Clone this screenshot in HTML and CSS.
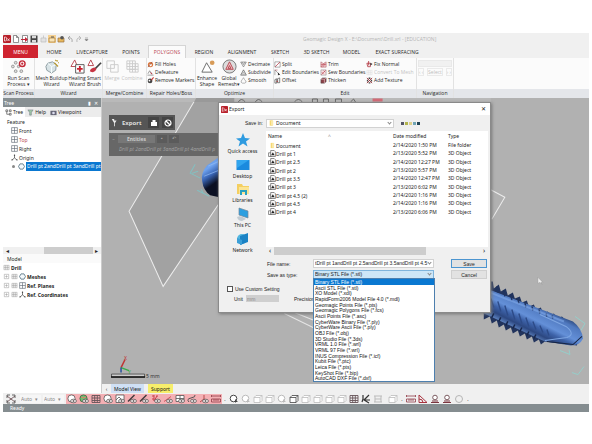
FILE: index.html
```html
<!DOCTYPE html>
<html lang="en">
<head>
<meta charset="utf-8">
<title>Geomagic Design X</title>
<link rel="stylesheet" href="styles.css">
</head>
<body>
<svg class="defs" aria-hidden="true">
  <symbol id="app" viewBox="0 0 8 8"><rect width="8" height="8" rx="1" fill="#b8202a"/><path d="M1.5 2v4h1.2q1-.5 1-2t-1-2zM4.5 3.5l2 2.5M6.5 3.5l-2 2.5" stroke="#fff" stroke-width=".7" fill="none"/></symbol>
  <symbol id="doc" viewBox="0 0 8 8"><path d="M1.5.5h3l2 2v5h-5zM4.500.5v2h2" fill="#fff" stroke="#666" stroke-width=".7"/></symbol>
  <symbol id="plane" viewBox="0 0 8 8"><path d="M.7.7h6.600v6.600H.7zM4 .7v6.600M.7 4h6.600" fill="#fff" stroke="#5b6570" stroke-width=".7"/></symbol>
  <symbol id="origin" viewBox="0 0 8 8"><path d="M4 1v3.500L1 7M4 4.500 7 7" fill="none" stroke="#444" stroke-width=".8"/><circle cx="4" cy="1.500" r=".8" fill="#444"/><circle cx="1.200" cy="6.700" r=".8" fill="#444"/><circle cx="6.800" cy="6.700" r=".8" fill="#444"/></symbol>
  <symbol id="hex" viewBox="0 0 8 8"><path d="M2.300 1h3.400L7.400 4 5.700 7H2.300L.6 4z" fill="#f3f8fb" stroke="#4d6b7c" stroke-width=".9"/></symbol>
  <symbol id="box" viewBox="0 0 8 8"><path d="M1 1.500h6v5H1zM1 4h6M3 1.500v5M5 1.500v5" fill="#eee" stroke="#999" stroke-width=".5"/></symbol>
  <symbol id="plus" viewBox="0 0 8 8"><path d="M1.500 1.500h5v5h-5zM4 2.500v3M2.500 4h3" fill="#fff" stroke="#999" stroke-width=".6"/></symbol>
  <symbol id="tri" viewBox="0 0 8 8"><path d="M4 1 7.200 7H.8z" fill="none" stroke="#555" stroke-width=".8"/><path d="M4 3.500 5.300 6H2.700z" fill="none" stroke="#777" stroke-width=".5"/></symbol>
  <symbol id="deci" viewBox="0 0 8 8"><path d="M.8 1.200h6.400L4 6.800zM2.300 1.200 4 4l1.700-2.800" fill="none" stroke="#666" stroke-width=".7"/></symbol>
  <symbol id="smooth" viewBox="0 0 8 8"><path d="M4 .8Q5 3 6.500 4.500T5.500 7h-3q-2-1-1-2.500T4 .8z" fill="none" stroke="#888" stroke-width=".7"/></symbol>
  <symbol id="split" viewBox="0 0 8 8"><path d="M1 1h6v6H1z" fill="#fff" stroke="#666" stroke-width=".6"/><path d="M1.200 6.800 6.800 1.200" stroke="#b94450" stroke-width=".9"/></symbol>
  <symbol id="edge" viewBox="0 0 8 8"><path d="M1 7V1l6 6" fill="none" stroke="#666" stroke-width=".6"/><path d="M4.500 4v3.500l1-1H7z" fill="#222"/><path d="M1 1.200h3" stroke="#b94450" stroke-width=".6"/></symbol>
  <symbol id="offset" viewBox="0 0 8 8"><path d="M1 3v4h2V2zM4 2v4.500h2.500V1z" fill="#eee" stroke="#444" stroke-width=".7"/><path d="M3 5h1.500" stroke="#b33"/></symbol>
  <symbol id="trim" viewBox="0 0 8 8"><path d="M1 7V1l3 2 3-2v6z" fill="#f0c9cc" stroke="#a95b63" stroke-width=".6"/><path d="M1 7 5 2M3 7l3-4M1 4h6" stroke="#b94450" stroke-width=".6"/></symbol>
  <symbol id="sew" viewBox="0 0 8 8"><path d="M1 1h6v6H1z" fill="#f7dfe1" stroke="#777" stroke-width=".5"/><path d="M1.500 6.500 6.500 1.500M2 3.500l2 2M4 1.800l2 2" stroke="#b94450" stroke-width=".7"/></symbol>
  <symbol id="thick" viewBox="0 0 8 8"><path d="M1 2.500 3 1h4v4.500L5 7H1z" fill="#8b4048" stroke="#444" stroke-width=".5"/><path d="M1 2.500h4V7M5 2.500 7 1" fill="none" stroke="#f2d5d7" stroke-width=".7"/></symbol>
  <symbol id="norm" viewBox="0 0 8 8"><path d="M1 2.500h4v4H2zM3 0v5" fill="none" stroke="#b0303b" stroke-width=".9"/><path d="m5 2 2.500 1.500L5 5z" fill="#333"/></symbol>
  <symbol id="tex" viewBox="0 0 8 8"><path d="m1 1 6 6M7 1 1 7" stroke="#a4323c" stroke-width="1"/><path d="M1 3h1.500v2H1zM5.500 3H7v2H5.500zM3 .7h2v1.500H3zM3 6h2v1.500H3z" fill="#444"/></symbol>
  <symbol id="fill" viewBox="0 0 8 8"><circle cx="4" cy="4" r="3" fill="#d9773f"/><circle cx="4" cy="4.500" r="1.500" fill="#fff"/><path d="M1 7 6 1" stroke="#7a3020" stroke-width=".7"/></symbol>
  <symbol id="defe" viewBox="0 0 8 8"><path d="M.5 7h7M1 5.500 3 2l2 3" fill="none" stroke="#777" stroke-width=".8"/><path d="m4 4 2 2" stroke="#b0303b" stroke-width="1.200"/></symbol>
  <symbol id="remo" viewBox="0 0 8 8"><circle cx="3.500" cy="4.500" r="2.700" fill="#444"/><circle cx="2.800" cy="4" r="1" fill="#fff"/><path d="M5 3.500 7.500.5" stroke="#c33" stroke-width="1.200"/></symbol>
  <symbol id="eye" viewBox="0 0 12 10"><ellipse cx="7.500" cy="7" rx="3" ry="1.800" fill="#efe6e6" stroke="#4b4b4b" stroke-width=".7"/><circle cx="7.500" cy="7" r=".8" fill="#333"/></symbol>
  <symbol id="ball" viewBox="0 0 12 10"><circle cx="5.500" cy="4.500" r="3.600" fill="#fff" stroke="#555" stroke-width=".8"/><use href="#eye" width="12" height="10"/></symbol>
  <symbol id="gball" viewBox="0 0 12 10"><circle cx="5.500" cy="4.500" r="3.600" fill="#6fbf72" stroke="#3c6340" stroke-width=".8"/><path d="M3 3q2 2 5 0" stroke="#e76" fill="none"/><use href="#eye" width="12" height="10"/></symbol>
  <symbol id="gridi" viewBox="0 0 12 10"><path d="M2 1.500h8v7H2zM2 4h8M2 6.500h8M4.700 1.500v7M7.300 1.500v7" fill="none" stroke="#665358" stroke-width=".9"/></symbol>
  <symbol id="cube" viewBox="0 0 12 10"><path d="M2 3.500 4 1.500h6v5l-2 2H2zM2 3.500h6v5M8 3.500l2-2" fill="#fff" stroke="currentColor" stroke-width=".8"/></symbol>
  <symbol id="pict" viewBox="0 0 12 10"><path d="M2 1h8v7.500H2zM2 6l3-3 4 4" fill="#fff" stroke="#555" stroke-width=".8"/><use href="#eye" width="12" height="10"/></symbol>
  <symbol id="pen" viewBox="0 0 12 10"><path d="M2 7.500 8.500 1" stroke="#403a3c" stroke-width="1.400"/><use href="#eye" width="12" height="10"/></symbol>
  <symbol id="pts" viewBox="0 0 12 10"><path d="M2 2h2M6 2h2M2 5h2M4 1v6M7 2 4 7" stroke="#c8404c" stroke-width="1"/><use href="#eye" width="12" height="10"/></symbol>
  <symbol id="line" viewBox="0 0 12 10"><path d="M2 7.500 9 2.500" stroke="#c8404c" stroke-width=".8"/><use href="#eye" width="12" height="10"/></symbol>
  <symbol id="curve" viewBox="0 0 12 10"><path d="M3 8Q0 5 5 4t4-3" stroke="#555" fill="none"/><use href="#eye" width="12" height="10"/></symbol>
  <symbol id="axes" viewBox="0 0 12 10"><path d="M6 1v4L2 8M6 5l4 3" stroke="#a33" fill="none" stroke-width=".8"/><use href="#eye" width="12" height="10"/></symbol>
  <symbol id="planes" viewBox="0 0 12 10"><path d="M2 1.500h8v6H2zM6 1.500v6M2 4.500h8" fill="#fff" stroke="#555" stroke-width=".8"/><use href="#eye" width="12" height="10"/></symbol>
  <symbol id="ruler" viewBox="0 0 12 10"><path d="M1.500 2h9M1.500 5h9v3h-9zM4 5v2M6 5v2M8 5v2M1.500 1v2M10.500 1v2" fill="none" stroke="#903b46" stroke-width=".8"/></symbol>
  <symbol id="angle" viewBox="0 0 12 10"><path d="M2 1v7.500h8zM2 5q4 0 4 3.500" fill="none" stroke="#a8323e" stroke-width="1"/></symbol>
  <symbol id="stamp" viewBox="0 0 12 10"><path d="M2 8.500h8M3 7h6" stroke="#7c3640"/><circle cx="6" cy="3.500" r="2.300" fill="#fff" stroke="#6d4b50" stroke-width=".9"/></symbol>
  <symbol id="lasso" viewBox="0 0 12 10"><circle cx="5.500" cy="4.500" r="3.300" fill="#fff" stroke="currentColor"/><path d="M7 5v4l1-1h2z" fill="currentColor"/></symbol>
  <symbol id="dotd" viewBox="0 0 12 10"><path d="m2 2 8 6M10 2 2 8" stroke="#604146" stroke-width=".8"/><path d="M2 1h3M7 1h3M2 9h3M7 9h3M2 1v3M10 1v3M2 6v3M10 6v3" stroke="#444" stroke-width=".8"/></symbol>
  <symbol id="file3d" viewBox="0 0 9 8"><path d="M.6 3.200h3V7.400h-3z" fill="#fff" stroke="#444" stroke-width=".7"/><path d="M3 .6h4l1.400 1.400v5.400H3z" fill="#fff" stroke="#444" stroke-width=".7"/><path d="M5.500 2.500 7.500 6h-4z" fill="#222"/></symbol>
  <symbol id="folder" viewBox="0 0 9 8"><path d="M3 1h3.500v6H3z" fill="#f6d873"/><path d="M4.500 1.500H7v5H4.500z" fill="#fbe9a8"/></symbol>
</svg>

<div class="app">
  <header class="titlebar">
    <div class="quick">
      <svg><use href="#app"/></svg>
      <svg><use href="#doc"/></svg>
      <svg viewBox="0 0 8 8"><path d="M1.500.5h5v7h-5z" fill="#fff" stroke="#666" stroke-width=".7"/><path d="M0 4h4V2l3 2.500L4 7V5H0z" fill="#c0283a"/></svg>
      <svg viewBox="0 0 8 8"><path d="M.5.5h7v7h-7z" fill="#444"/><path d="M2 .8h4v2.500H2zM2 5h4v2.500H2z" fill="#ddd"/></svg>
      <svg viewBox="0 0 8 8"><path d="M2 3h5v4H2zM4.500 3V.5" fill="#e2e2e2" stroke="#bbb" stroke-width=".7"/></svg>
      <svg class="hot" viewBox="0 0 8 8"><path d="M1 3h6v4H1z" fill="#f8e4b8" stroke="#a97b35" stroke-width=".7"/><path d="M3 2h3" stroke="#555"/></svg>
      <svg viewBox="0 0 8 8"><path d="M1 3h6v4H1z" fill="#e9b95c" stroke="#987040" stroke-width=".7"/><circle cx="5" cy="2.800" r="1.800" fill="#555"/></svg>
      <svg viewBox="0 0 8 8"><path d="M6 7Q7 2 2 3M4 1 2 3l2 2" fill="none" stroke="#aaa"/></svg>
      <svg viewBox="0 0 8 8"><path d="M2 7Q1 2 6 3M4 1l2 2-2 2" fill="none" stroke="#bbb"/></svg>
      <svg viewBox="0 0 8 8"><path d="M1 3h3M1 4.500h3L2.500 6z" stroke="#777" fill="#777" stroke-width=".5"/></svg>
    </div>
    <div class="title">Geomagic Design X - E:\Document\Drill.xrl - [EDUCATION]</div>
  </header>

  <nav class="tabs">
    <button class="tab menu">MENU</button>
    <button class="tab">HOME</button>
    <button class="tab">LIVECAPTURE</button>
    <button class="tab">POINTS</button>
    <button class="tab active">POLYGONS</button>
    <button class="tab">REGION</button>
    <button class="tab">ALIGNMENT</button>
    <button class="tab">SKETCH</button>
    <button class="tab">3D SKETCH</button>
    <button class="tab">MODEL</button>
    <button class="tab">EXACT SURFACING</button>
  </nav>

  <section class="ribbon">
    <div class="group g-scan">
      <div class="tools">
        <button class="big"><svg viewBox="0 0 16 16"><g fill="#ddd" stroke="#888" stroke-width=".8"><circle cx="5" cy="4" r="1.500"/><circle cx="2" cy="8" r="1.500"/><circle cx="8" cy="8" r="1.300"/><circle cx="5" cy="13" r="1.500"/><circle cx="11" cy="13" r="1.500"/></g><circle cx="12" cy="5" r="3" fill="#fff" stroke="#c42836" stroke-width="1.500"/><circle cx="12" cy="5" r="1.200" fill="#c42836"/></svg>Run Scan<br>Process ▾</button>
      </div>
      <div class="caption">Scan Process</div>
    </div>
    <div class="group g-wizard">
      <div class="tools">
        <button class="big w32"><svg viewBox="0 0 16 16"><path d="M4 4.500 9 3l4 3-.5 6L8 15l-5-3-1-4z" fill="#d8e3e6" stroke="#8b9ba0"/><path d="M4 4.500 8 8l5-2M8 8v7" stroke="#f9ffff" fill="none"/><path d="m11 4 4 4M14 1v2M15 4h1M12 1l1 1" stroke="#b89a32" stroke-width="1.200"/></svg>Mesh Buildup<br>Wizard</button>
        <button class="big w18"><svg viewBox="0 0 16 16"><path d="M5 1 1 8h7z" fill="#fff" stroke="#b74650"/><path d="M6 6h9v9H6z" fill="#fff" stroke="#555"/><path d="M10.500 7.500v6M7.500 10.500h6" stroke="#c9202e" stroke-width="2"/></svg>Healing<br>Wizard</button>
        <button class="big w16"><svg viewBox="0 0 16 16"><path d="M4 1 1 7h6z" fill="#fff" stroke="#b74650"/><path d="m15 4-7 7" stroke="#444" stroke-width="1.800"/><path d="M9 9q-5 0-6 4 5 3 7-2z" fill="#c73543"/></svg>Smart<br>Brush</button>
      </div>
      <div class="caption">Wizard</div>
    </div>
    <div class="group g-merge">
      <div class="tools">
        <button class="big dim w18" disabled><svg viewBox="0 0 16 16"><path d="M2 2h8v8H2zM6 6h8v8H6z" fill="none" stroke="#ccc"/></svg>Merge</button>
        <button class="big dim w22" disabled><svg viewBox="0 0 16 16"><path d="M2 2h9v9H2zM5 2v12M8 2v12M2 5h12M2 8h12M5 14h9V5M5 11h9M11 5v9" fill="none" stroke="#ccc"/></svg>Combine</button>
      </div>
      <div class="caption">Merge/Combine</div>
    </div>
    <div class="group g-repair">
      <div class="stack">
        <button class="small"><svg><use href="#fill"/></svg>Fill Holes</button>
        <button class="small"><svg><use href="#defe"/></svg>Defeature</button>
        <button class="small"><svg><use href="#remo"/></svg>Remove Markers</button>
      </div>
      <div class="caption">Repair Holes/Boss</div>
    </div>
    <div class="group g-opt">
      <div class="tools">
        <button class="big w22"><svg viewBox="0 0 16 16"><path d="M7 4 13 14H2z" fill="#fff" stroke="#666"/><circle cx="13" cy="4" r="2.500" fill="#d79b58"/></svg>Enhance<br>Shape</button>
        <button class="big w22"><svg viewBox="0 0 16 16"><circle cx="8" cy="8" r="7" fill="#ddd" stroke="#777"/><path d="m8 3 4 8H4zM8 7l1.500 3h-3z" fill="#f0c5c8" stroke="#b74650"/></svg>Global<br>Remesh▾</button>
        <div class="stack">
          <button class="small"><svg><use href="#deci"/></svg>Decimate</button>
          <button class="small"><svg><use href="#tri"/></svg>Subdivide</button>
          <button class="small"><svg><use href="#smooth"/></svg>Smooth</button>
        </div>
      </div>
      <div class="caption">Optimize</div>
    </div>
    <div class="group g-edit">
      <div class="three">
        <button class="small"><svg><use href="#split"/></svg>Split</button>
        <button class="small"><svg><use href="#trim"/></svg>Trim</button>
        <button class="small"><svg><use href="#norm"/></svg>Fix Normal</button>
        <button class="small"><svg><use href="#edge"/></svg>Edit Boundaries</button>
        <button class="small"><svg><use href="#sew"/></svg>Sew Boundaries</button>
        <button class="small dim" disabled><svg class="faint"><use href="#box"/></svg>Convert To Mesh</button>
        <button class="small"><svg><use href="#offset"/></svg>Offset</button>
        <button class="small"><svg><use href="#thick"/></svg>Thicken</button>
        <button class="small"><svg><use href="#tex"/></svg>Add Texture</button>
      </div>
      <div class="caption">Edit</div>
    </div>
    <div class="group g-nav">
      <div class="navbox">
        <select class="navsel" aria-label="Navigation target" disabled><option></option></select>
        <div class="navrow"><button disabled>‹ ‹</button><button disabled>Select</button><button disabled>› ›</button></div>
      </div>
      <div class="caption">Navigation</div>
    </div>
    <div class="group g-rest"><div class="caption"></div></div>
  </section>

  <main class="work">
    <aside class="side">
      <div class="sidehead"><span>Tree</span><span>▮ &nbsp;✕</span></div>
      <div class="sidetabs">
        <button class="on"><svg viewBox="0 0 8 8"><path d="M1 1h2v2H1zM5 1h2v2H5zM5 5h2v2H5zM2 3v3h3" fill="none" stroke="#555" stroke-width=".8"/></svg>Tree</button>
        <button><svg viewBox="0 0 8 8"><path d="M1 1h6L5 4v3H3V4z" fill="#9ec9a8" stroke="#667" stroke-width=".5"/></svg>Help</button>
        <button><svg viewBox="0 0 8 8"><path d="M.5 2h7v5h-7z" fill="#667"/><circle cx="4" cy="4.500" r="1.500" fill="#dde"/></svg>Viewpoint</button>
      </div>
      <div class="tree">
        <div class="row root">Feature</div>
        <div class="row leaf"><svg><use href="#plane"/></svg>Front</div>
        <div class="row leaf red"><svg><use href="#plane"/></svg>Top</div>
        <div class="row leaf"><svg><use href="#plane"/></svg>Right</div>
        <div class="row leaf"><svg><use href="#origin"/></svg>Origin</div>
        <div class="row leaf picked"><i class="dot"></i><svg><use href="#hex"/></svg><span>Drill pt 2andDrill pt 3andDrill pt</span></div>
      </div>
      <div class="hscroll"><span>◂</span><i></i><span>▸</span></div>
      <div class="tree model">
        <div class="row root light">Model</div>
        <div class="row"><svg><use href="#box"/></svg><b>Drill</b></div>
        <div class="row"><svg><use href="#plus"/></svg><svg><use href="#box"/></svg><svg><use href="#hex"/></svg><b>Meshes</b></div>
        <div class="row"><svg><use href="#plus"/></svg><svg><use href="#box"/></svg><svg><use href="#plane"/></svg><b>Ref. Planes</b></div>
        <div class="row"><svg><use href="#plus"/></svg><svg><use href="#box"/></svg><svg><use href="#origin"/></svg><b>Ref. Coordinates</b></div>
      </div>
    </aside>

    <div class="view">
      <div class="stage">
        <svg class="scene" viewBox="103 98 486 286" preserveAspectRatio="xMinYMin slice">
          <defs>
            <linearGradient id="g1" gradientUnits="userSpaceOnUse" x1="538" y1="302" x2="520" y2="338">
              <stop offset="0" stop-color="#294478"/><stop offset=".15" stop-color="#5079bf"/><stop offset=".42" stop-color="#6490d8"/><stop offset=".55" stop-color="#3d62a8"/><stop offset=".7" stop-color="#2c4780"/><stop offset=".82" stop-color="#587cb8"/><stop offset="1" stop-color="#16223f"/>
            </linearGradient>
            <linearGradient id="g2" x1="0" y1="0" x2=".3" y2="1">
              <stop offset="0" stop-color="#5e8fdc"/><stop offset=".35" stop-color="#6fa3ef"/><stop offset=".55" stop-color="#3a66b6"/><stop offset=".8" stop-color="#0b1022"/>
            </linearGradient>
          </defs>
          <rect x="103" y="98" width="486" height="286" fill="#b1b1b1"/>
          <path d="M197 98 130 211 164 286 222 200 300 98z" fill="#a2a2a2"/>
          <path d="M197 98 130 211 164 286 222 200" fill="none" stroke="#ededed"/>
          <path d="M103 98h388v4H103z" fill="#b9b9b9"/>
          <path d="M197 98h38v4h-40z" fill="#999"/>
          <g fill="none" stroke="#555" stroke-width=".8"><path d="M239 102q3-5 7 0M256 102q3-5 7 0M295 102q4-5 8 0M313 102v-3h5v3M324 102v-3h5v3M336 102v-3h6v3M351 102l3-3 2 3"/><path d="M373 100h10" stroke="#d36a76" stroke-width="3"/></g>
          <path d="m490 189 15 8-13 22" fill="none" stroke="#ededed"/>
          <path d="m285 308 30 12M285 313l45 22" stroke="#e5e5e5"/>
          <path d="M220 157 208 165Q201 173 203 181 204 190 211 195L220 197z" fill="url(#g2)"/>
          <path d="m209 166 11-5M205 176l15-6" stroke="#93bbf2" stroke-width=".7"/>
          <g fill="none" stroke="#84bfc0"><path d="m196 164-5 9 10 5M193 173l6-2M198 190l12 6M204 193l-2-4"/><path d="m575 316 10 7-4 7M560 350l10 4-1-5M572 372l6 2 6-8" stroke="#8fd5cf" stroke-width=".8"/></g>
          <path d="M484 288 488 281 493 281 494 288 499 284 501 291 506 288 508 295 513 292 515 298 520 296 522 302 527 300 529 306 534 304 536 309 541 307 543 313 548 311 550 315 554 313 557 318 562 316 567 321 578 334 577 345 545 341 541 344 539 339 534 342 532 336 527 339 525 333 520 336 518 330 513 333 511 327 506 330 504 324 499 327 497 320 492 323 490 316 484 319z" fill="#22345d"/>
          <path d="M484 287 560 316 573 321Q582 328 583 338 580 345 571 345L545 341 482 312z" fill="url(#g1)"/>
          <path d="m489 283 2 7M497 286l1 6M504 290l1 6M511 294l1 6M518 298l1 5M525 302l1 5M532 306l1 4M539 309l1 4M546 313l1 3M552 315l1 3" stroke="#1f335f" stroke-width="1.400"/>
          <g stroke="#2d4b88" stroke-width="1.400" fill="none"><path d="m491 298 3 9M498 301l3 10M505 305l3 10M512 309l3 10M519 313l3 10M526 317l3 9M533 321l3 8M540 325l3 7M547 329l2 6"/></g>
          <path d="m492 317 2-4M499 321l2-4M506 325l2-4M513 328l2-4M520 331l2-4M527 335l2-4M534 338l2-4" stroke="#17264a" stroke-width="1.500"/>
          <path d="m490 292 74 29" stroke="#7fa8e8" stroke-width="2" opacity=".6"/>
          <path d="M545 340 567 337Q576 334 566 326L540 314" fill="none" stroke="#7ea6e2" stroke-width="1"/>
          <path d="m547 341 26 3 9-8" fill="none" stroke="#172441"/>
          <path d="m538 277 5 5-2 0 1 2-2-2-2 1z" fill="#eee" stroke="#888" stroke-width=".4"/>
          <path d="m122 367 4-8" stroke="#c03232" stroke-width="1.500"/><path d="m122 367 8 3" stroke="#37ad49" stroke-width="1.300"/><path d="M122 367v5" stroke="#28509b" stroke-width="1.500"/>
          <text x="125" y="359" class="ax red">X</text><text x="129" y="373" class="ax green">Y</text>
          <path d="M112.500 373.500h33v3h-33z" fill="#ccc" stroke="#333" stroke-width=".7"/><path d="M112 376.500h34" stroke="#111" stroke-width="1.500"/>
          <text x="147" y="377" class="ax">5 mm</text>
        </svg>

        <div class="exportbar">
          <svg viewBox="0 0 8 10"><path d="M0 0h3v2h3l-2 3v4H3V5L1 2z" fill="#eee"/></svg><b>Export</b>
          <button aria-label="Confirm"><svg viewBox="0 0 8 8"><path d="M1 3h6v4H1zM2.500 3V1h3v2z" fill="#fff"/></svg></button>
          <button aria-label="Cancel command"><svg viewBox="0 0 8 8"><circle cx="4" cy="4" r="3" fill="none" stroke="#fff" stroke-width="1.200"/><path d="m2 2 4 4" stroke="#fff" stroke-width="1.200"/></svg></button>
        </div>
        <div class="entities">
          <div class="enthead"><span>–</span><b>Entities</b><i>▪</i><i>↶</i></div>
          <div class="enttext">Drill pt 2andDrill pt 3andDrill pt 4andDrill p</div>
        </div>

        <div class="dialog" role="dialog" aria-label="Export">
          <div class="dhead"><svg><use href="#app"/></svg><span>Export</span><button aria-label="Close">✕</button></div>
          <div class="savein">
            <label for="where">Save in:</label>
            <div class="combo wide"><svg><use href="#folder"/></svg><select id="where"><option>Document</option></select></div>
            <div class="minis"><i class="a"></i><i class="b"></i><i class="c"></i><i class="d"></i><i class="e"></i></div>
          </div>
          <div class="dbody">
            <div class="places">
              <button><svg viewBox="0 0 16 14"><path d="m8 0 2 5 5 .5-4 3 1.500 5L8 10.500 3.500 13.500 5 8.500 1 5.500 6 5z" fill="#2f9be0"/></svg>Quick access</button>
              <button><svg viewBox="0 0 16 14"><path d="M1.500 2h13v10h-13z" fill="#1a8ade"/><path d="M2 2h12L2 10z" fill="#31a5ee"/></svg>Desktop</button>
              <button><svg viewBox="0 0 16 14"><path d="M2 2h5l1 2h6v8H2z" fill="#f4cf61"/><path d="M4 5h10v7H4z" fill="#fbe493"/><path d="M5 13V8h7v5h-2v-3H7v3z" fill="#28a0c0"/></svg>Libraries</button>
              <button><svg viewBox="0 0 16 14"><path d="m4 1 9 3v7L4 8z" fill="#2b9fe0" stroke="#73879a" stroke-width=".7"/><path d="M2 10q4-2 9 2l-4 2q-4 0-5-4z" fill="#c1cbd2"/></svg>This PC</button>
              <button><svg viewBox="0 0 16 14"><circle cx="7" cy="7" r="5" fill="#53b6df"/><path d="m5 4 8-3v9l-8 3z" fill="#1b83c5"/><path d="m2 6 5 2v5L2 11z" fill="#3b9fd7"/></svg>Network</button>
            </div>
            <div class="files">
              <table>
                <thead><tr><th class="cn">Name<span class="sort">^</span></th><th class="cd">Date modified</th><th>Type</th></tr></thead>
                <tbody>
                  <tr><td><svg><use href="#folder"/></svg>Document</td><td>2/14/2020 1:50 PM</td><td>File folder</td></tr>
                  <tr><td><svg><use href="#file3d"/></svg>Drill pt 1</td><td>2/13/2020 5:52 PM</td><td>3D Object</td></tr>
                  <tr><td><svg><use href="#file3d"/></svg>Drill pt 2.5</td><td>2/14/2020 12:27 PM</td><td>3D Object</td></tr>
                  <tr><td><svg><use href="#file3d"/></svg>Drill pt 2</td><td>2/13/2020 5:57 PM</td><td>3D Object</td></tr>
                  <tr><td><svg><use href="#file3d"/></svg>Drill pt 3.5</td><td>2/14/2020 12:47 PM</td><td>3D Object</td></tr>
                  <tr><td><svg><use href="#file3d"/></svg>Drill pt 3</td><td>2/13/2020 6:02 PM</td><td>3D Object</td></tr>
                  <tr><td><svg><use href="#file3d"/></svg>Drill pt 4.5 (2)</td><td>2/14/2020 1:16 PM</td><td>3D Object</td></tr>
                  <tr><td><svg><use href="#file3d"/></svg>Drill pt 4.5</td><td>2/14/2020 1:16 PM</td><td>3D Object</td></tr>
                  <tr><td><svg><use href="#file3d"/></svg>Drill pt 4</td><td>2/13/2020 6:06 PM</td><td>3D Object</td></tr>
                </tbody>
              </table>
              <div class="fscroll"><span>‹</span><i></i><span>›</span></div>
            </div>
          </div>
          <div class="fields">
            <label for="fname">File name:</label>
            <div class="combo"><input id="fname" value="tDrill pt 1andDrill pt 2.5andDrill pt 3.5andDrill pt 4.5"></div>
            <button class="push primary">Save</button>
            <label for="ftype">Save as type:</label>
            <div class="combo open"><select id="ftype"><option>Binary STL File (*.stl)</option></select></div>
            <button class="push">Cancel</button>
          </div>
          <div class="custom"><input type="checkbox" id="custom"><label for="custom">Use Custom Setting</label></div>
          <div class="unit"><label for="unit">Unit</label><select id="unit" disabled><option>mm</option></select><span>Precision</span></div>
        </div>

        <ul class="types" role="listbox" aria-label="File types">
          <li class="sel" role="option" aria-selected="true">Binary STL File (*.stl)</li>
          <li role="option">Ascii STL File (*.stl)</li>
          <li role="option">XO Model (*.xdl)</li>
          <li role="option">RapidForm2006 Model File 4.0 (*.mdl)</li>
          <li role="option">Geomagic Points File (*.pts)</li>
          <li role="option">Geomagic Polygons File (*.fcs)</li>
          <li role="option">Ascii Points File (*.asc)</li>
          <li role="option">CyberWare Binary File (*.ply)</li>
          <li role="option">CyberWare Ascii File (*.ply)</li>
          <li role="option">OBJ File (*.obj)</li>
          <li role="option">3D Studio File (*.3ds)</li>
          <li role="option">VRML 1.0 File (*.wrl)</li>
          <li role="option">VRML 97 File (*.wrl)</li>
          <li role="option">INUS Compression File (*.icf)</li>
          <li role="option">Kubit File (*.ptc)</li>
          <li role="option">Leica File (*.pts)</li>
          <li role="option">KeyShot File (*.bip)</li>
          <li role="option">AutoCAD DXF File (*.dxf)</li>
        </ul>
      </div>
      <div class="viewtabs"><span>‹</span><button class="mv">Model View</button><button class="sp">Support</button></div>
    </div>
  </main>

  <div class="toolbar">
    <svg class="lead"><use href="#dotd"/></svg>
    <select class="auto" aria-label="Selection mode"><option>Auto &nbsp;▾</option></select>
    <select class="auto" aria-label="Selection filter"><option>Auto &nbsp;▾</option></select>
    <div class="pink">
      <svg><use href="#ball"/></svg><svg><use href="#gball"/></svg><svg><use href="#gridi"/></svg><svg><use href="#ball"/></svg><svg><use href="#pict"/></svg><svg><use href="#pen"/></svg><svg><use href="#pen"/></svg><svg><use href="#pts"/></svg><svg><use href="#line"/></svg><svg><use href="#planes"/></svg><svg><use href="#curve"/></svg><svg><use href="#axes"/></svg><svg><use href="#ruler"/></svg>
    </div>
    <span class="stop">.</span>
    <div class="grays">
      <svg class="dk"><use href="#lasso"/></svg><svg><use href="#lasso"/></svg><svg><use href="#cube"/></svg><svg><use href="#cube"/></svg><svg><use href="#lasso"/></svg><svg class="dk"><use href="#cube"/></svg><svg><use href="#cube"/></svg><svg><use href="#cube"/></svg><svg><use href="#cube"/></svg><svg><use href="#cube"/></svg><svg><use href="#gridi"/></svg><svg viewBox="0 0 12 10"><path d="M3 1v4l-1 3M9 1 4 6l5 3M4 6h6" fill="none" stroke="#333" stroke-width="1.200"/></svg><svg viewBox="0 0 12 10"><path d="M2 2h8M3 2v6M9 2v6M3 5h6M2 8h8" fill="none" stroke="#bbb"/></svg>
    </div>
    <svg class="copy"><use href="#cube"/></svg>
    <span class="stop">.</span>
    <div class="grays">
      <svg><use href="#ruler"/></svg><svg><use href="#angle"/></svg><svg><use href="#stamp"/></svg><svg><use href="#stamp"/></svg><svg viewBox="0 0 12 10"><circle cx="6" cy="5" r="3.500" fill="none" stroke="#b5b5b5"/></svg>
    </div>
    <span class="stop">.</span>
  </div>
  <footer class="status">Ready</footer>
</div>
</body>
</html>
```

FILE: styles.css
```css
*, *::before, *::after { box-sizing: border-box; }
body {
  margin: 0;
  height: 100vh;
  padding: 33px 3px 32px;
  background: #fff;
  color: #262626;
  font: 5px/6px "Noto Sans", "Open Sans", sans-serif;
}
button, select, input {
  font: inherit;
  color: inherit;
  margin: 0;
  padding: 0;
  border: 0;
  background: none;
  border-radius: 0;
}
select { appearance: none; }
svg { display: block; flex: none; width: 8px; height: 8px; }
i { font-style: normal; }
.defs { position: absolute; width: 0; height: 0; }
.app { height: 100%; display: flex; flex-direction: column; background: #f0f0f0; }

/* title bar and ribbon tabs */
.titlebar { height: 12px; display: flex; align-items: center; font-family: "Open Sans", sans-serif; }
.quick { display: flex; gap: 1px; width: 300px; }
.quick .hot { background: #f6d191; }
.title { color: #b5b5b5; white-space: nowrap; }
.tabs { display: grid; grid-template-columns: 35px 32px 44px 34px 38px 36px 40px 36px 37px 33px 58px; height: 13px; flex: none; font-family: "Open Sans", sans-serif; }
.tab { text-align: center; white-space: nowrap; }
.menu { background: #cf2430; color: #fff; }
.active { background: #fbfbfb; color: #b94b55; border: 1px solid #d5d5d5; border-bottom: 0; }

/* ribbon */
.ribbon { display: flex; height: 40px; flex: none; background: #fbfbfb; font-family: "Open Sans", sans-serif; }
.group { display: flex; flex-direction: column; flex: none; border-right: 1px solid #e2e2e2; }
.caption { margin-top: auto; height: 9px; line-height: 9px; text-align: center; background: #e4e6ea; white-space: nowrap; }
.g-scan { width: 32px; }
.g-wizard { width: 68px; }
.g-merge { width: 44px; }
.g-repair { width: 49px; }
.g-opt { width: 78px; }
.g-edit { width: 143px; }
.g-nav { width: 37px; }
.g-rest { flex: 1; border: 0; }
.tools { display: flex; }
.big { width: 32px; display: block; line-height: 6px; white-space: nowrap; padding-top: 1px; }
.big svg { width: 15px; height: 15px; margin: 0 auto 1px; }
.w32 { width: 33px; }
.w22 { width: 22px; }
.w18 { width: 18px; }
.w16 { width: 16px; }
.dim { color: #c4c4c4; }
.faint { opacity: .3; }
.stack { display: flex; flex-direction: column; padding-top: 2px; }
.small { display: flex; align-items: center; gap: 1px; height: 8px; white-space: nowrap; text-align: left; }
.small svg { width: 7px; height: 7px; }
.three { display: grid; grid-template-columns: 46px 46px 50px; padding-top: 2px; }
.navbox { padding: 2px 1px; color: #bbb; }
.navsel { width: 100%; height: 7px; background: #eee; border: 1px solid #e2e2e2; display: block; }
.navrow { display: flex; justify-content: space-between; margin-top: 1px; }
.navrow button { border: 1px solid #eaeaea; }

/* work area */
.work { flex: 1; min-height: 0; display: grid; grid-template-columns: 99px 1fr; }
.side { background: #fff; border-right: 1px solid #ccc; overflow: hidden; }
.sidehead { height: 9px; padding: 0 3px 0 1px; display: flex; justify-content: space-between; align-items: center; background: #878f92; color: #fff; }
.sidetabs { height: 10px; display: flex; background: #ececec; }
.sidetabs button { display: flex; align-items: center; gap: 1px; padding: 0 2px; }
.sidetabs svg { width: 7px; height: 7px; }
.sidetabs .on { background: #fff; }
.row { height: 9px; display: flex; align-items: center; gap: 1px; white-space: nowrap; }
.tree { height: 130px; }
.root { padding-left: 4px; }
.leaf { padding-left: 8px; }
.row svg { width: 7px; height: 7px; }
.red { color: #b94b55; }
.picked span { flex: 1; background: #0a78d1; color: #fff; line-height: 9px; padding-left: 1px; }
.dot { width: 3px; height: 3px; margin: 0 2px 0 1px; border-radius: 2px; background: #888; }
.hscroll { height: 7px; display: flex; align-items: center; justify-content: space-between; padding: 0 3px; background: #f0f0f0; }
.hscroll i { width: 49px; height: 7px; margin-left: auto; margin-right: 2px; background: #cdcdcd; }
.hscroll span { font-size: 6px; }
.model { height: auto; }
.light { background: #fafafa; }

.view { display: flex; flex-direction: column; min-width: 0; }
.stage { position: relative; flex: 1; background: #b1b1b1; }
.scene { position: absolute; inset: 0; width: 100%; height: 100%; }
.ax { font-size: 5px; fill: #333; }
.ax.red { fill: #c03232; }
.ax.green { fill: #37ad49; }
.viewtabs { height: 9px; display: flex; align-items: center; background: #f0f0f0; }
.viewtabs span { width: 9px; text-align: center; }
.viewtabs button { height: 9px; padding: 0 3px; color: #111; }
.mv { background: #cfe0f5; }
.viewtabs .sp { margin-left: 4px; background: #f7ee6b; }

/* floating command panels */
.exportbar { position: absolute; left: 7px; top: 17px; width: 66px; height: 15px; display: flex; align-items: center; gap: 3px; padding: 0 2px; background: #555; color: #ddd; font-size: 6px; }
.exportbar b { flex: 1; }
.exportbar button { width: 11px; height: 11px; display: grid; place-items: center; background: #444; }
.entities { position: absolute; left: 7px; top: 35px; width: 109px; height: 23px; padding: 2px 2px; background: #676767; color: #a5a5a5; }
.enthead { display: flex; align-items: center; gap: 2px; }
.enthead b { width: 37px; height: 8px; line-height: 8px; text-align: center; background: #777; color: #ccc; }
.enthead span { width: 5px; text-align: center; }
.enthead i { width: 10px; height: 8px; text-align: center; background: #5b5b5b; }
.enttext { margin: 3px 0 0 8px; white-space: nowrap; font-style: italic; font-family: "Open Sans", sans-serif; }

/* export dialog */
.dialog { position: absolute; left: 116px; top: 4px; width: 273px; height: 211px; padding-right: 2px; border: 1px solid #8a8a8a; background: #f0f0f0; color: #1c1c1c; box-shadow: 1px 1px 3px #777; }
.dhead { height: 12px; margin-right: -2px; display: flex; align-items: center; gap: 1px; padding: 0 4px 0 2px; background: #fff; }
.dhead svg { width: 7px; height: 7px; }
.dhead button { margin-left: auto; font-size: 6px; }
.savein { height: 16px; display: flex; align-items: center; }
.savein label { width: 44px; text-align: right; font-family: "Liberation Sans", sans-serif; }
.combo { position: relative; height: 9px; display: flex; align-items: center; background: #fff; border: 1px solid #d2d2d2; font-family: "Liberation Sans", sans-serif; }
.combo::after { content: ""; position: absolute; right: 2px; top: 1px; width: 3px; height: 3px; border: solid #888; border-width: 0 1px 1px 0; transform: rotate(45deg); }
.combo select, .combo input { width: 100%; height: 7px; line-height: 7px; outline: 0; padding-left: 1px; }
.wide { width: 128px; margin-left: 3px; font-family: inherit; }
.open { background: #cde6f7; border-color: #7fb4dc; }
.minis { display: flex; gap: 1px; margin-left: 7px; }
.minis i { width: 3px; height: 3px; background: #556; }
.minis .b { background: #b2b44d; }
.minis .c { background: #ddd08e; }
.minis .d { background: #70a4b5; }
.minis .e { background: #245; }
.dbody { display: grid; grid-template-columns: 47px 1fr; height: 124px; }
.places { display: grid; grid-template-rows: repeat(5, 1fr); }
.places button { display: flex; flex-direction: column; align-items: center; justify-content: center; gap: 1px; white-space: nowrap; }
.places svg { width: 16px; height: 14px; }
.files { background: #fff; display: flex; flex-direction: column; justify-content: space-between; }
table { width: 100%; height: 85px; border-collapse: collapse; table-layout: fixed; }
th, td { padding: 0 0 0 2px; text-align: left; font-weight: 400; white-space: nowrap; line-height: 6px; vertical-align: middle; }
th { height: 10px; }
td { height: 8px; }
td svg { display: inline-block; width: 8px; height: 7px; vertical-align: -1px; }
.cn { width: 125px; }
.cd { width: 55px; }
.sort { margin-left: 46px; color: #888; }
.fscroll { height: 8px; display: flex; align-items: center; background: #f0f0f0; }
.fscroll span { width: 8px; text-align: center; font-size: 7px; }
.fscroll i { width: 152px; height: 8px; margin-right: auto; background: #cdcdcd; }
.fields { display: grid; grid-template-columns: 46px 121px 36px; row-gap: 2px; justify-content: start; align-items: center; margin: 4px 0 0 48px; font-family: "Liberation Sans", sans-serif; }
.push { height: 9px; margin: 0 -17px 0 17px; background: #e2e2e2; border: 1px solid #cfcfcf; }
.primary { border-color: #4c95d0; }
.custom { display: flex; align-items: center; gap: 2px; margin: 7px 0 0 8px; font-family: "Liberation Sans", sans-serif; }
.custom input { appearance: none; width: 6px; height: 6px; background: #fff; border: 1px solid #555; }
.unit { display: flex; align-items: center; margin: 3px 0 0 15px; font-family: "Liberation Sans", sans-serif; }
.unit label { width: 12px; }
.unit select { width: 33px; height: 7px; background: #cfcfcf; color: #888; padding-left: 1px; margin-right: 15px; opacity: 1; }
.types { position: absolute; left: 211px; top: 180px; width: 122px; height: 104px; margin: 0; padding: 0; list-style: none; display: flex; flex-direction: column; background: #fff; border: 1px solid #4d7fae; color: #111; font-family: "Liberation Sans", sans-serif; }
.types li { flex: 1; min-height: 0; padding-left: 1px; white-space: nowrap; }
.types .sel { background: #0a78d1; color: #fff; }

/* bottom bars */
.toolbar { height: 11px; flex: none; display: flex; align-items: center; color: #888; }
.toolbar svg { width: 12px; height: 10px; color: #bbb; }
.toolbar .lead { margin: 0 3px 0 2px; }
.auto { width: 21px; height: 8px; margin-right: 2px; padding-left: 1px; background: #f6f6f6; }
.pink { display: flex; background: #f4b0b4; }
.stop { width: 6px; text-align: center; color: #222; }
.grays { display: flex; }
.toolbar .dk { color: #444; }
.toolbar .copy { margin-left: 3px; }
.status { height: 8px; flex: none; padding-left: 7px; line-height: 8px; background: #858d90; color: #fff; }
```
